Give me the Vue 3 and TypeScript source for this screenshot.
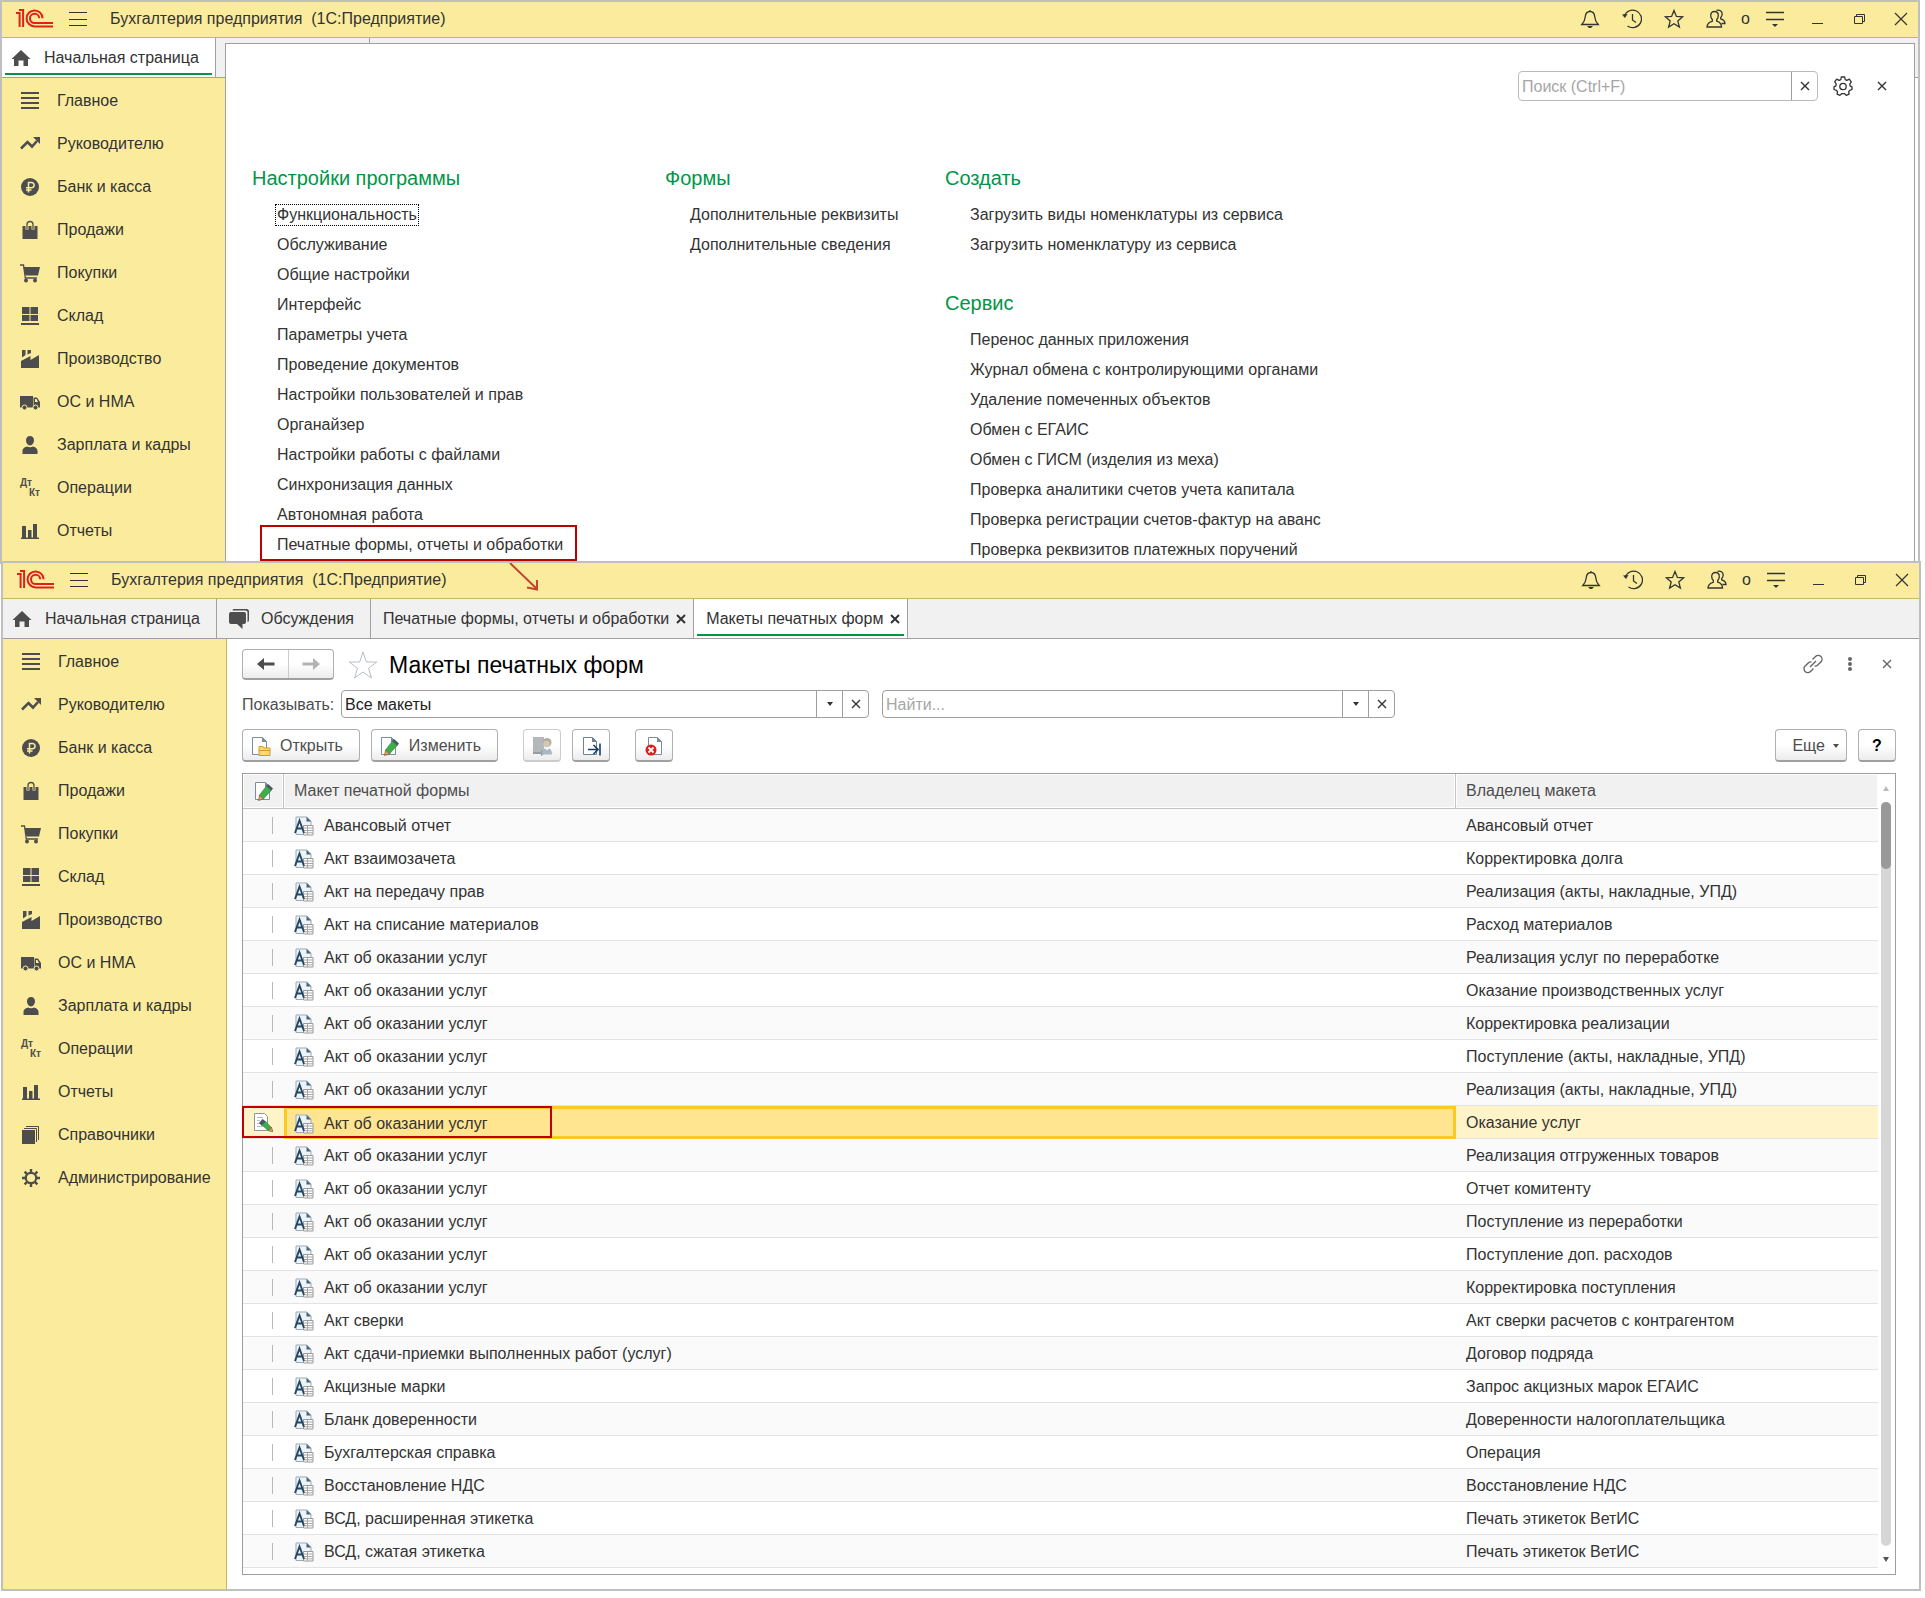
<script setup lang="ts">
import { ref } from 'vue'

interface Section {
  label: string
  icon: string
}

interface Template {
  name: string
  owner: string
  edited?: boolean
}

interface MenuGroup {
  title: string
  items: string[]
}

interface AppWindow {
  id: 'menu' | 'list'
  sections: Section[]
}

const sections: Section[] = [
  { label: 'Главное', icon: 'lines' },
  { label: 'Руководителю', icon: 'trend' },
  { label: 'Банк и касса', icon: 'ruble' },
  { label: 'Продажи', icon: 'bag' },
  { label: 'Покупки', icon: 'cart' },
  { label: 'Склад', icon: 'store' },
  { label: 'Производство', icon: 'factory' },
  { label: 'ОС и НМА', icon: 'truck' },
  { label: 'Зарплата и кадры', icon: 'person' },
  { label: 'Операции', icon: 'dtkt' },
  { label: 'Отчеты', icon: 'chart' },
  { label: 'Справочники', icon: 'books' },
  { label: 'Администрирование', icon: 'cog' },
]

const windows: AppWindow[] = [
  { id: 'menu', sections: sections.slice(0, 11) },
  { id: 'list', sections },
]

const menuColumns: MenuGroup[][] = [
  [
    {
      title: 'Настройки программы',
      items: [
        'Функциональность',
        'Обслуживание',
        'Общие настройки',
        'Интерфейс',
        'Параметры учета',
        'Проведение документов',
        'Настройки пользователей и прав',
        'Органайзер',
        'Настройки работы с файлами',
        'Синхронизация данных',
        'Автономная работа',
        'Печатные формы, отчеты и обработки',
      ],
    },
  ],
  [{ title: 'Формы', items: ['Дополнительные реквизиты', 'Дополнительные сведения'] }],
  [
    {
      title: 'Создать',
      items: ['Загрузить виды номенклатуры из сервиса', 'Загрузить номенклатуру из сервиса'],
    },
    {
      title: 'Сервис',
      items: [
        'Перенос данных приложения',
        'Журнал обмена с контролирующими органами',
        'Удаление помеченных объектов',
        'Обмен с ЕГАИС',
        'Обмен с ГИСМ (изделия из меха)',
        'Проверка аналитики счетов учета капитала',
        'Проверка регистрации счетов-фактур на аванс',
        'Проверка реквизитов платежных поручений',
      ],
    },
  ],
]

const service = 'Акт об оказании услуг'
const templates: Template[] = [
  { name: 'Авансовый отчет', owner: 'Авансовый отчет' },
  { name: 'Акт взаимозачета', owner: 'Корректировка долга' },
  { name: 'Акт на передачу прав', owner: 'Реализация (акты, накладные, УПД)' },
  { name: 'Акт на списание материалов', owner: 'Расход материалов' },
  { name: service, owner: 'Реализация услуг по переработке' },
  { name: service, owner: 'Оказание производственных услуг' },
  { name: service, owner: 'Корректировка реализации' },
  { name: service, owner: 'Поступление (акты, накладные, УПД)' },
  { name: service, owner: 'Реализация (акты, накладные, УПД)' },
  { name: service, owner: 'Оказание услуг', edited: true },
  { name: service, owner: 'Реализация отгруженных товаров' },
  { name: service, owner: 'Отчет комитенту' },
  { name: service, owner: 'Поступление из переработки' },
  { name: service, owner: 'Поступление доп. расходов' },
  { name: service, owner: 'Корректировка поступления' },
  { name: 'Акт сверки', owner: 'Акт сверки расчетов с контрагентом' },
  { name: 'Акт сдачи-приемки выполненных работ (услуг)', owner: 'Договор подряда' },
  { name: 'Акцизные марки', owner: 'Запрос акцизных марок ЕГАИС' },
  { name: 'Бланк доверенности', owner: 'Доверенности налогоплательщика' },
  { name: 'Бухгалтерская справка', owner: 'Операция' },
  { name: 'Восстановление НДС', owner: 'Восстановление НДС' },
  { name: 'ВСД, расширенная этикетка', owner: 'Печать этикеток ВетИС' },
  { name: 'ВСД, сжатая этикетка', owner: 'Печать этикеток ВетИС' },
]

const filter = ref('Все макеты')
const query = ref('')
const menuQuery = ref('')
</script>

<template>
  <div class="page">
    <svg class="sprite" aria-hidden="true">
      <symbol id="i-logo" viewBox="0 0 38 19">
        <g fill="none" stroke="#e0201b" stroke-width="2">
          <path d="M0 3.9h3.6V18M3 1h4.1v17" />
          <path d="M26.6 9.2A8 8 0 1 0 18.6 17.4H37" />
          <path d="M23.2 9.2a4.6 4.6 0 1 0-4.6 4.8H37" />
        </g>
      </symbol>
      <symbol id="i-menu" viewBox="0 0 20 20">
        <path d="M1 3.5h18M1 10.5h18M1 16.5h18" fill="none" stroke="currentColor" />
      </symbol>
      <symbol id="i-bell" viewBox="0 0 20 20">
        <path d="M10 2.5c-3.5 0-4.6 2.8-4.8 5.5C5 11.500 4 13 1.800 15.500h16.400C16 13 15 11.500 14.800 8c-.2-2.700-1.300-5.500-4.800-5.500zM10 1v1.500" fill="none" stroke="currentColor" stroke-width="1.300" />
        <path d="M7 17h6l-2 2H9z" fill="currentColor" />
      </symbol>
      <symbol id="i-history" viewBox="0 0 20 20">
        <path d="M2.200 7.500A8.800 8.800 0 1 1 5.500 17M10.500 5v6l3.500 2.500" fill="none" stroke="currentColor" stroke-width="1.300" />
        <path d="M0 5.500l5.500-.5-2.500 4z" fill="currentColor" />
      </symbol>
      <symbol id="i-star" viewBox="0 0 20 20">
        <path d="M10 1.500l2.400 5.900 6.300.4-4.900 4.100 1.600 6.200L10 14.700l-5.400 3.400 1.600-6.200-4.900-4.100 6.300-.4z" fill="none" stroke="currentColor" stroke-width="1.300" />
      </symbol>
      <symbol id="i-people" viewBox="0 0 20 20">
        <path d="M8.500 2.500c2.300 0 3.800 1.500 3.800 4 0 2-.8 3.200-1.600 4v1.700c1.800.6 4.800 1.500 4.800 5.800H1c0-4.300 3.500-5.200 5.300-5.800v-1.700c-.8-.8-1.600-2-1.600-4 0-2.500 1.500-4 3.800-4z" fill="none" stroke="currentColor" stroke-width="1.300" />
        <path d="M10.500 1.400c3-1 5.700.6 5.700 3.600 0 1.800-.8 2.800-1.500 3.500v1.300c2 .6 4.300 1.400 4.300 4.700h-3.500" fill="none" stroke="currentColor" stroke-width="1.300" />
      </symbol>
      <symbol id="i-panel" viewBox="0 0 20 20">
        <path d="M1 3.500h18M1 10.500h18" fill="none" stroke="currentColor" stroke-width="1.300" />
        <path d="M7 15h6l-3 3z" fill="currentColor" />
      </symbol>
      <symbol id="i-min" viewBox="0 0 20 20">
        <path d="M5 14.500h11" fill="none" stroke="currentColor" />
      </symbol>
      <symbol id="i-restore" viewBox="0 0 20 20">
        <path d="M5.500 7.500h8v7h-8zM7.500 7.500v-2h8v7h-2" fill="none" stroke="currentColor" />
      </symbol>
      <symbol id="i-close" viewBox="0 0 20 20">
        <path d="M4 4l12 12M16 4L4 16" fill="none" stroke="currentColor" stroke-width="1.200" />
      </symbol>
      <symbol id="i-x" viewBox="0 0 10 10">
        <path d="M1 1l8 8M9 1L1 9" fill="none" stroke="currentColor" stroke-width="1.400" />
      </symbol>
      <symbol id="i-xbold" viewBox="0 0 10 10">
        <path d="M1 1l8 8M9 1L1 9" fill="none" stroke="currentColor" stroke-width="2" />
      </symbol>
      <symbol id="i-down" viewBox="0 0 10 10">
        <path d="M2 3h6L5 7z" fill="currentColor" />
      </symbol>
      <symbol id="i-gear" viewBox="0 0 20 20">
        <path d="M8.300 1h3.400l.5 2.600 1.700.8 2.400-1.200 2 2.600-1.500 2.100.3 1.900 1.900 1v2.700l-2.300.8-1 1.600.4 2.300-2.800 1.200-1.700-1.700h-3l-1.700 1.700-2.800-1.200.4-2.300-1-1.600L1 13.500v-2.700l1.900-1 .3-1.900-1.500-2.100 2-2.600 2.400 1.200 1.700-.8z" fill="none" stroke="currentColor" stroke-width="1.300" stroke-linejoin="round" />
        <circle cx="10" cy="10.500" r="3.200" fill="none" stroke="currentColor" stroke-width="1.300" />
      </symbol>
      <symbol id="i-home" viewBox="0 0 20 20">
        <path d="M10 2l9.500 9H17v7h-4.500v-5.500h-5V18H3v-7H.5z" fill="currentColor" />
      </symbol>
      <symbol id="i-chat" viewBox="0 0 20 20">
        <path d="M4.500 0h13A2.500 2.500 0 0 1 20 2.500v8.500a2 2 0 0 1-1.500 2V3.500a2 2 0 0 0-2-2h-13A2 2 0 0 1 4.500 0z" fill="currentColor" />
        <path d="M2 3h13a2 2 0 0 1 2 2v8a2 2 0 0 1-2 2h-1.500v5L8 15H2a2 2 0 0 1-2-2V5a2 2 0 0 1 2-2z" fill="currentColor" />
      </symbol>

      <symbol id="i-lines" viewBox="0 0 20 20">
        <path d="M1 1h18v2H1zM1 6h18v2H1zM1 11h18v2H1zM1 16h18v2H1z" fill="currentColor" />
      </symbol>
      <symbol id="i-trend" viewBox="0 0 20 20">
        <path d="M1 14.500L7.500 8l4.500 4.500 5-5.500" fill="none" stroke="currentColor" stroke-width="2.600" />
        <path d="M13 3h7v7z" fill="currentColor" />
      </symbol>
      <symbol id="i-ruble" viewBox="0 0 20 20">
        <circle cx="10" cy="10" r="9" fill="currentColor" />
        <path d="M8.500 15.500V5.500h3a2.500 2.500 0 0 1 0 5.200h-5.500M6 13h5.500" fill="none" stroke="#fbec9d" stroke-width="1.500" />
      </symbol>
      <symbol id="i-bag" viewBox="0 0 20 20">
        <path d="M2.500 6h15v13h-15z" fill="currentColor" />
        <path d="M7 9.500V5M13 9.500V5" fill="none" stroke="#fbec9d" stroke-width="3" />
        <path d="M7 9V4.500a3 3 0 0 1 6 0V9" fill="none" stroke="currentColor" stroke-width="1.300" />
      </symbol>
      <symbol id="i-cart" viewBox="0 0 20 20">
        <path d="M3.500 4H20l-2 8.500H5.500z" fill="currentColor" />
        <path d="M0 2h3.500l1.800 13H17" fill="none" stroke="currentColor" stroke-width="1.300" />
        <circle cx="6" cy="17.500" r="2" fill="currentColor" />
        <circle cx="15" cy="17.500" r="2" fill="currentColor" />
      </symbol>
      <symbol id="i-store" viewBox="0 0 20 20">
        <path d="M2 1h7.500v7H2zM10.500 1H18v7h-7.500zM2 9h7.500v6H2zM10.500 9H18v6h-7.500zM1 17h18v2H1z" fill="currentColor" />
      </symbol>
      <symbol id="i-factory" viewBox="0 0 20 20">
        <path d="M1 19v-7l9.500-5v4L19 6v13zM2 1h3.500v5L2 8.500zM7.500 1H11v3L7.500 5.500z" fill="currentColor" />
      </symbol>
      <symbol id="i-truck" viewBox="0 0 20 20">
        <path d="M0 4h13v11.500H0zM13.500 5.500H17l3 4.500v5.500h-6.500z" fill="currentColor" />
        <path d="M15 7h1.500L18 10h-3z" fill="#fbec9d" />
        <g fill="currentColor" stroke="#fbec9d">
          <circle cx="4.500" cy="15.500" r="2.500" />
          <circle cx="15.500" cy="15.500" r="2.500" />
        </g>
      </symbol>
      <symbol id="i-person" viewBox="0 0 20 20">
        <path d="M10 1c2.500 0 4 1.800 4 4.300S12.400 10.500 10 10.500 6 8 6 5.300 7.500 1 10 1zM2.500 19v-3c0-3 3-4 4.500-4.500 1.500 1 4.500 1 6 0 1.500.5 4.500 1.500 4.500 4.500v3z" fill="currentColor" />
      </symbol>
      <symbol id="i-chart" viewBox="0 0 20 20">
        <path d="M2 5h4v12H2zM8 9h3.500v8H8zM13 3h4v14h-4zM1 16.500h18V18H1z" fill="currentColor" />
      </symbol>
      <symbol id="i-books" viewBox="0 0 20 20">
        <path d="M1 5h13v14H1z" fill="currentColor" />
        <path d="M3 3.500h12.500V17M5 1.500h12.500V15" fill="none" stroke="currentColor" />
      </symbol>
      <symbol id="i-cog" viewBox="0 0 20 20">
        <g fill="none" stroke="currentColor">
          <circle cx="10" cy="10" r="5.200" stroke-width="2.200" />
          <path d="M10 1v3.500M10 15.500V19M1 10h3.500M15.500 10H19M3.600 3.600l2.500 2.500M13.900 13.900l2.500 2.500M16.400 3.600l-2.500 2.500M6.100 13.900l-2.500 2.500" stroke-width="2.400" />
        </g>
      </symbol>

      <symbol id="i-sheet" viewBox="0 0 20 20">
        <path d="M1.500 1.500h10l4 4v13h-14z" fill="#fff" stroke="#7d8c9b" />
        <path d="M11 1l5 5h-5z" fill="#7d8c9b" />
      </symbol>
      <symbol id="i-open" viewBox="0 0 20 20">
        <use href="#i-sheet" />
        <path d="M8 10.500h4l1 1.500h6v7.500H8z" fill="#ffd873" stroke="#d79a1e" />
        <path d="M8 14.500h11" stroke="#d79a1e" />
      </symbol>
      <symbol id="i-edit" viewBox="0 0 20 20">
        <use href="#i-sheet" />
        <path d="M14 3l5 4.500-2.500 3-5-4.500z" fill="#47566b" />
        <path d="M12.500 5l4.500 4.500-7.500 8.500-4-4z" fill="#3fae49" stroke="#2b8434" stroke-width=".6" />
        <path d="M5.500 14l4 4-5 1.500z" fill="#e0a06a" stroke="#6b4423" stroke-width=".6" />
      </symbol>
      <symbol id="i-edited" viewBox="0 0 20 20">
        <path d="M1.500 1.500h10l3 3v14h-13z" fill="#fff" stroke="#8a97a3" />
        <path d="M4 5.500h6M4 8.500h3M4 11.500h4M4 14.500h6" stroke="#b5bcc4" />
        <path d="M9.500 7L6 11l3 3 4.500-4z" fill="#47566b" />
        <path d="M12.500 9.500l6 6-3.500 3-6-5.500z" fill="#3fae49" stroke="#2b8434" stroke-width=".6" />
        <path d="M18.500 15.500L15 18.500l5 1.300z" fill="#e0a06a" stroke="#6b4423" stroke-width=".6" />
      </symbol>
      <symbol id="i-layout" viewBox="0 0 20 20">
        <path d="M2 1h11l4 4v13.500H2z" fill="#eef3f6" stroke="#9aabb8" />
        <path d="M12.500 1l4.500 4.500h-4.500z" fill="#3f637c" />
        <path d="M9.500 9.500h9.500v9.500H9.500z" fill="#fff" stroke="#9a9a9a" />
        <path d="M10 12h9M10 14.500h9M10 16.800h9M13.500 10v9" stroke="#a8a8a8" />
        <path d="M1 17L5.500 4.500L10 17M2.500 12.500h6" fill="none" stroke="#234866" stroke-width="1.900" />
      </symbol>
      <symbol id="i-user" viewBox="0 0 20 20">
        <path d="M1 1h11v17H1z" fill="#b4b8bc" />
        <path d="M1 16h8v-2.500l4 3.500-4 3.500V18H1z" fill="#999da1" />
        <path d="M10 18.500c0-4 1.500-5.500 3-6l2 2 2-2c1.500.5 3 2 3 6z" fill="#a9b8c2" />
        <circle cx="15" cy="6.500" r="4.500" fill="#b5ab9a" />
        <circle cx="14.500" cy="8" r="3.200" fill="#d3c9b6" />
      </symbol>
      <symbol id="i-goto" viewBox="0 0 20 20">
        <path d="M2.500 1.500h9l4 4v13h-13z" fill="#fff" stroke="#6f8294" />
        <path d="M11 1l5 5h-5z" fill="#6f8294" />
        <path d="M7 13.500h9M12.500 9l4.500 4.500-4.500 4.500" fill="none" stroke="#173f5f" stroke-width="1.600" />
        <path d="M19 7.500v12" stroke="#173f5f" stroke-width="1.600" />
      </symbol>
      <symbol id="i-reset" viewBox="0 0 20 20">
        <path d="M4.500 1.500h9l4 4v13h-13z" fill="#fff" stroke="#7d8c9b" />
        <path d="M13 1l5 5h-5z" fill="#7d8c9b" />
        <circle cx="7" cy="14" r="5.500" fill="#d8201f" />
        <path d="M4.500 11.500l5 5M9.500 11.500l-5 5" stroke="#fff" stroke-width="1.800" />
      </symbol>
      <symbol id="i-back" viewBox="0 0 20 20">
        <path d="M1 10l7-6v4.500h10.500v3H8V16z" fill="currentColor" />
      </symbol>
      <symbol id="i-forward" viewBox="0 0 20 20">
        <path d="M19 10l-7-6v4.500H1.500v3H12V16z" fill="currentColor" />
      </symbol>
      <symbol id="i-bigstar" viewBox="0 0 30 30">
        <path d="M15 2l3.400 10h10.300l-8.200 6.300 3 9.700-8.500-6-8.500 6 3-9.700L1.300 12h10.300z" fill="none" stroke="#b9bec4" />
      </symbol>
      <symbol id="i-link" viewBox="0 0 20 20">
        <g fill="none" stroke="currentColor" stroke-width="1.400">
          <path d="M9.500 5.500l3-3a3.800 3.800 0 0 1 5.400 5.400l-3.200 3.200a3.800 3.800 0 0 1-3.200 1" />
          <path d="M10.500 14.500l-3 3a3.800 3.800 0 0 1-5.400-5.400l3.200-3.200a3.800 3.800 0 0 1 3.200-1" />
          <path d="M7 13l6-6" />
        </g>
      </symbol>
      <symbol id="i-dots" viewBox="0 0 20 20">
        <g fill="currentColor">
          <circle cx="10" cy="5" r="2" />
          <circle cx="10" cy="10" r="2" />
          <circle cx="10" cy="15" r="2" />
        </g>
      </symbol>
    </svg>

    <section v-for="win in windows" :key="win.id" class="window" :class="'window-' + win.id">
      <header class="titlebar">
        <svg class="logo"><use href="#i-logo" /></svg>
        <button class="icon-button" aria-label="Меню"><svg class="icon"><use href="#i-menu" /></svg></button>
        <span class="app-title">Бухгалтерия предприятия&nbsp; (1С:Предприятие)</span>
        <button class="icon-button" aria-label="Оповещения"><svg class="icon"><use href="#i-bell" /></svg></button>
        <button class="icon-button" aria-label="История"><svg class="icon"><use href="#i-history" /></svg></button>
        <button class="icon-button" aria-label="Избранное"><svg class="icon"><use href="#i-star" /></svg></button>
        <div class="users">
          <button class="icon-button" aria-label="Пользователи"><svg class="icon"><use href="#i-people" /></svg></button>
          <span class="user-name">о</span>
          <button class="icon-button" aria-label="Настройки"><svg class="icon"><use href="#i-panel" /></svg></button>
        </div>
        <button class="icon-button" aria-label="Свернуть"><svg class="icon"><use href="#i-min" /></svg></button>
        <button class="icon-button" aria-label="Восстановить"><svg class="icon"><use href="#i-restore" /></svg></button>
        <button class="icon-button" aria-label="Закрыть"><svg class="icon"><use href="#i-close" /></svg></button>
        <svg v-if="win.id === 'list'" class="arrow" viewBox="0 0 32 30" aria-hidden="true">
          <path d="M1 0l27 26M28 17v9.500l-10-2" fill="none" stroke="#c2472f" stroke-width="2" />
        </svg>
      </header>

      <nav class="tabs">
        <a href="#" class="tab tab-home" :class="{ active: win.id === 'menu' }">
          <svg class="icon"><use href="#i-home" /></svg>
          <span>Начальная страница</span>
        </a>
        <a href="#" class="tab tab-chat">
          <svg class="icon"><use href="#i-chat" /></svg>
          <span>Обсуждения</span>
        </a>
        <template v-if="win.id === 'list'">
          <a href="#" class="tab tab-form">
            <span>Печатные формы, отчеты и обработки</span>
            <svg class="mark"><use href="#i-xbold" /></svg>
          </a>
          <a href="#" class="tab tab-form active">
            <span>Макеты печатных форм</span>
            <svg class="mark"><use href="#i-xbold" /></svg>
          </a>
        </template>
      </nav>

      <div class="body">
        <aside class="sidebar">
          <a v-for="s in win.sections" :key="s.label" href="#" class="section">
            <span v-if="s.icon === 'dtkt'" class="dtkt" aria-hidden="true"><b>Дт</b><b>Кт</b></span>
            <svg v-else class="icon"><use :href="'#i-' + s.icon" /></svg>
            <span>{{ s.label }}</span>
          </a>
        </aside>

        <div v-if="win.id === 'menu'" class="menu">
          <div class="menu-tools">
            <div class="field menu-search">
              <input v-model="menuQuery" type="text" placeholder="Поиск (Ctrl+F)" aria-label="Поиск" />
              <button class="field-button" aria-label="Очистить"><svg class="mark"><use href="#i-x" /></svg></button>
            </div>
            <button class="icon-button" aria-label="Настройка"><svg class="icon"><use href="#i-gear" /></svg></button>
            <button class="icon-button menu-close" aria-label="Закрыть меню"><svg class="mark"><use href="#i-x" /></svg></button>
          </div>
          <div class="menu-columns">
            <div v-for="(column, c) in menuColumns" :key="c" class="menu-column">
              <div v-for="group in column" :key="group.title" class="menu-group">
                <h2>{{ group.title }}</h2>
                <ul>
                  <li v-for="(item, i) in group.items" :key="item">
                    <a href="#" :class="{ focused: c === 0 && i === 0, marked: c === 0 && i === 11 }">{{ item }}</a>
                  </li>
                </ul>
              </div>
            </div>
          </div>
        </div>

        <main v-else class="content">
          <div class="heading">
            <div class="history">
              <button aria-label="Назад"><svg class="icon"><use href="#i-back" /></svg></button>
              <button aria-label="Вперед" disabled><svg class="icon"><use href="#i-forward" /></svg></button>
            </div>
            <svg class="favorite"><use href="#i-bigstar" /></svg>
            <h1>Макеты печатных форм</h1>
            <div class="heading-tools">
              <button class="icon-button" aria-label="Ссылка"><svg class="icon"><use href="#i-link" /></svg></button>
              <button class="icon-button" aria-label="Действия"><svg class="icon"><use href="#i-dots" /></svg></button>
              <button class="icon-button" aria-label="Закрыть форму"><svg class="mark"><use href="#i-x" /></svg></button>
            </div>
          </div>

          <div class="filters">
            <label for="filter">Показывать:</label>
            <div class="field filter-field">
              <select id="filter" v-model="filter">
                <option>Все макеты</option>
              </select>
              <span class="field-button"><svg class="mark"><use href="#i-down" /></svg></span>
              <button class="field-button" aria-label="Сбросить"><svg class="mark"><use href="#i-x" /></svg></button>
            </div>
            <div class="field search-field">
              <input v-model="query" type="text" placeholder="Найти..." aria-label="Найти" />
              <button class="field-button" aria-label="Прошлые запросы"><svg class="mark"><use href="#i-down" /></svg></button>
              <button class="field-button" aria-label="Очистить"><svg class="mark"><use href="#i-x" /></svg></button>
            </div>
          </div>

          <div class="toolbar">
            <button class="button"><svg class="icon"><use href="#i-open" /></svg>Открыть</button>
            <button class="button"><svg class="icon"><use href="#i-edit" /></svg>Изменить</button>
            <button class="button square spaced" disabled aria-label="Для пользователя"><svg class="icon"><use href="#i-user" /></svg></button>
            <button class="button square" aria-label="Перейти"><svg class="icon"><use href="#i-goto" /></svg></button>
            <button class="button square spaced" aria-label="Удалить измененный"><svg class="icon"><use href="#i-reset" /></svg></button>
            <button class="button more">Еще<svg class="mark"><use href="#i-down" /></svg></button>
            <button class="button square help">?</button>
          </div>

          <div class="list">
            <table>
              <colgroup>
                <col class="col-state" />
                <col />
                <col class="col-owner" />
              </colgroup>
              <thead>
                <tr>
                  <th class="state" aria-label="Изменен"><svg class="icon"><use href="#i-edit" /></svg></th>
                  <th>Макет печатной формы</th>
                  <th>Владелец макета</th>
                </tr>
              </thead>
              <tbody>
                <tr v-for="(row, i) in templates" :key="i" :class="{ selected: row.edited }">
                  <td class="state">
                    <svg v-if="row.edited" class="icon"><use href="#i-edited" /></svg>
                    <i v-else class="tick"></i>
                    <span v-if="row.edited" class="frame"></span>
                  </td>
                  <td class="name">
                    <div class="cell"><svg class="icon"><use href="#i-layout" /></svg>{{ row.name }}</div>
                  </td>
                  <td>{{ row.owner }}</td>
                </tr>
              </tbody>
            </table>
            <div class="scrollbar">
              <i class="up"></i>
              <div class="track"><div class="thumb"></div></div>
              <i class="down"></i>
            </div>
          </div>
        </main>
      </div>
    </section>
  </div>
</template>

<style>
body {
  margin: 0;
  background: #fff;
}
</style>

<style scoped>
.page {
  padding: 0 4px 7px 0;
  font: 16px/20px "Liberation Sans", Arial, sans-serif;
  color: #333;
}
.page *,
.page *::before,
.page *::after {
  box-sizing: border-box;
}
.sprite {
  display: none;
}
a {
  color: inherit;
  text-decoration: none;
}
button,
input,
select {
  font: inherit;
  color: inherit;
  margin: 0;
  padding: 0;
  border: 0;
  background: none;
  outline: none;
}
.icon {
  display: block;
  flex: none;
  width: 20px;
  height: 20px;
}
.mark {
  display: block;
  flex: none;
  width: 10px;
  height: 10px;
}

.window {
  position: relative;
  background: #fff;
  border: 2px solid #bfbfbf;
}
.window-menu {
  margin-right: 1px;
  border-bottom: 0;
}
.window-list {
  margin-top: -3px;
  margin-left: 1px;
}

.titlebar {
  position: relative;
  display: flex;
  align-items: center;
  gap: 22px;
  height: 36px;
  padding: 0 7px 2px 14px;
  background: #fbec9d;
  border-bottom: 1px solid #c8b75f;
}
.logo {
  width: 38px;
  height: 19px;
  margin-right: -8px;
}
.app-title {
  flex: 1;
}
.icon-button {
  display: flex;
  align-items: center;
  justify-content: center;
  width: 20px;
  height: 20px;
}
.users {
  display: flex;
  align-items: center;
  gap: 15px;
}
.user-name {
  width: 9px;
}
.arrow {
  position: absolute;
  left: 506px;
  top: 0;
  width: 32px;
  height: 30px;
}

.tabs {
  display: flex;
  height: 40px;
  background: #f1f1f1;
  border-bottom: 1px solid #a0a0a0;
}
.tab {
  position: relative;
  display: flex;
  align-items: center;
  padding: 0 9px;
  border-right: 1px solid #a0a0a0;
}
.tab.active {
  background: #fff;
}
.tab.active::after {
  content: "";
  position: absolute;
  left: 3px;
  right: 3px;
  bottom: 2px;
  height: 2px;
  background: #009646;
}
.tab-home {
  width: 214px;
  gap: 13px;
}
.tab-chat {
  width: 154px;
  padding-left: 12px;
  gap: 12px;
}
.tab-form {
  gap: 7px;
  padding: 0 7px 0 12px;
}

.body {
  display: flex;
}
.sidebar {
  flex: none;
  width: 223px;
  padding-top: 1px;
  background: #fbec9d;
}
.window-list .sidebar {
  width: 224px;
  border-right: 1px solid #c8b75f;
}
.section {
  display: flex;
  align-items: center;
  gap: 17px;
  height: 43px;
  padding-left: 18px;
}
.sidebar .icon,
.tab .icon {
  color: #4d4d4d;
}
.dtkt {
  display: flex;
  flex-direction: column;
  width: 20px;
  font-size: 10px;
  line-height: 10px;
  color: #4d4d4d;
}
.dtkt b:last-child {
  align-self: flex-end;
}

.menu {
  position: relative;
  flex: 1;
  margin: -35px 3px 0 0;
  padding: 27px 22px 0 26px;
  background: #fff;
  border: 1px solid #a0a0a0;
  border-bottom: 0;
}
.menu-tools {
  display: flex;
  justify-content: flex-end;
  align-items: center;
  gap: 15px;
}
.menu-close {
  margin-left: 4px;
}
.menu-columns {
  display: flex;
  margin-top: 56px;
}
.menu-column:nth-child(1) {
  width: 413px;
}
.menu-column:nth-child(2) {
  width: 280px;
}
.menu-group + .menu-group {
  margin-top: 23px;
}
h1,
h2 {
  margin: 0;
  font-weight: 400;
}
h2 {
  font-size: 20px;
  line-height: 42px;
  color: #009646;
}
ul {
  margin: 0;
  padding: 0 0 0 24px;
  list-style: none;
}
li {
  position: relative;
  display: flex;
  align-items: center;
  height: 30px;
  padding-top: 2px;
}
li a {
  padding: 0 1px;
}
li a.focused {
  outline: 1px dotted #000;
}
li a.marked::before {
  content: "";
  position: absolute;
  left: -16px;
  top: -4px;
  width: 317px;
  height: 36px;
  border: 2px solid #c00000;
}

.field {
  display: flex;
  height: 28px;
  border: 1px solid #9e9e9e;
  border-radius: 4px;
  background: #fff;
}
.field input,
.field select {
  flex: 1;
  min-width: 0;
  padding: 1px 3px 0;
  appearance: none;
}
.field input::placeholder {
  color: #a6a6a6;
  opacity: 1;
}
.field select {
  color: #222;
}
.field-button {
  display: flex;
  align-items: center;
  justify-content: center;
  width: 26px;
  border-left: 1px solid #9e9e9e;
}
.menu-search {
  width: 300px;
  height: 30px;
  border-color: #bbb;
}

.content {
  flex: 1;
  min-width: 0;
  padding: 10px 23px 14px 15px;
}
.heading {
  display: flex;
  align-items: center;
  height: 31px;
}
.history {
  display: flex;
  height: 31px;
  border: 1px solid #b0b0b0;
  border-bottom: 2px solid #a0a0a0;
  border-radius: 4px;
  background: linear-gradient(#fff 50%, #ececec);
}
.history button {
  display: flex;
  align-items: center;
  justify-content: center;
  width: 45px;
  color: #4d4d4d;
}
.history button + button {
  border-left: 1px solid #ccc;
  color: #b3b3b3;
}
.favorite {
  width: 30px;
  height: 30px;
  margin: 0 11px 0 14px;
}
h1 {
  flex: 1;
  font-size: 23px;
  line-height: 30px;
  color: #000;
}
.heading-tools {
  display: flex;
  gap: 17px;
  margin-right: -1px;
  padding-bottom: 2px;
  color: #666;
}
.filters {
  display: flex;
  align-items: center;
  margin-top: 10px;
}
.filters label {
  width: 99px;
  padding-top: 2px;
  color: #4d4d4d;
}
.filter-field {
  width: 528px;
  margin-right: 13px;
}
.search-field {
  width: 513px;
}

.toolbar {
  display: flex;
  gap: 11px;
  margin-top: 11px;
}
.button {
  display: flex;
  align-items: center;
  gap: 9px;
  height: 33px;
  padding: 1px 16px 0 8px;
  color: #4d4d4d;
  border: 1px solid #b0b0b0;
  border-bottom: 2px solid #a0a0a0;
  border-radius: 4px;
  background: linear-gradient(#fff 50%, #ececec);
}
.button.square {
  justify-content: center;
  width: 38px;
  padding: 1px 0 0;
}
.button.spaced {
  margin-left: 14px;
}
.button:disabled {
  border-color: #ccc;
}
.button.more {
  margin-left: auto;
  padding: 1px 5px 0 16px;
  gap: 6px;
}
.button.help {
  color: #000;
  font-weight: 700;
}

.list {
  display: flex;
  align-items: stretch;
  margin-top: 11px;
  border: 1px solid #9e9e9e;
  padding-bottom: 6px;
}
table {
  flex: 1;
  table-layout: fixed;
  width: 0;
  border-spacing: 0;
}
.col-state {
  width: 41px;
}
.col-owner {
  width: 422px;
}
th,
td {
  height: 33px;
  padding: 2px 10px 0;
  text-align: left;
  font-weight: 400;
  white-space: nowrap;
}
th {
  height: 35px;
  padding-top: 0;
  color: #4d4d4d;
  background: #f1f1f1;
  border-right: 1px solid #c4c4c4;
  border-bottom: 1px solid #c4c4c4;
  box-shadow: inset 0 0 0 1px #fff;
}
th:last-child {
  border-right: 0;
}
td {
  border-bottom: 1px solid #e3e3e3;
}
tbody tr:nth-child(odd) td {
  background: #fafafa;
}
th.state {
  padding: 0 0 0 11px;
}
td.state {
  position: relative;
  padding: 0 0 0 10px;
}
.tick {
  display: block;
  width: 1px;
  height: 17px;
  margin-left: 19px;
  background: #b8b8b8;
}
.cell {
  display: flex;
  align-items: center;
  gap: 10px;
}
tbody tr.selected td {
  background: #fff3c9;
}
tbody tr.selected td.name {
  padding: 2px 7px 0;
  background: #ffe58f;
  border: 3px solid #fac923;
}
.frame {
  position: absolute;
  z-index: 1;
  left: -1px;
  top: 0;
  width: 310px;
  height: 32px;
  border: 2px solid #c00000;
}
.scrollbar {
  display: flex;
  flex-direction: column;
  align-items: center;
  width: 17px;
  padding: 12px 1px 6px 0;
}
.up,
.down {
  border: 3px solid transparent;
}
.up {
  border-top: 0;
  border-bottom: 5px solid #bbb;
}
.down {
  border-bottom: 0;
  border-top: 5px solid #555;
}
.track {
  flex: 1;
  width: 10px;
  margin: 11px 0;
  border-radius: 5px;
  background: #d6d6d6;
}
.thumb {
  height: 9%;
  border-radius: 5px;
  background: #999;
}
</style>
